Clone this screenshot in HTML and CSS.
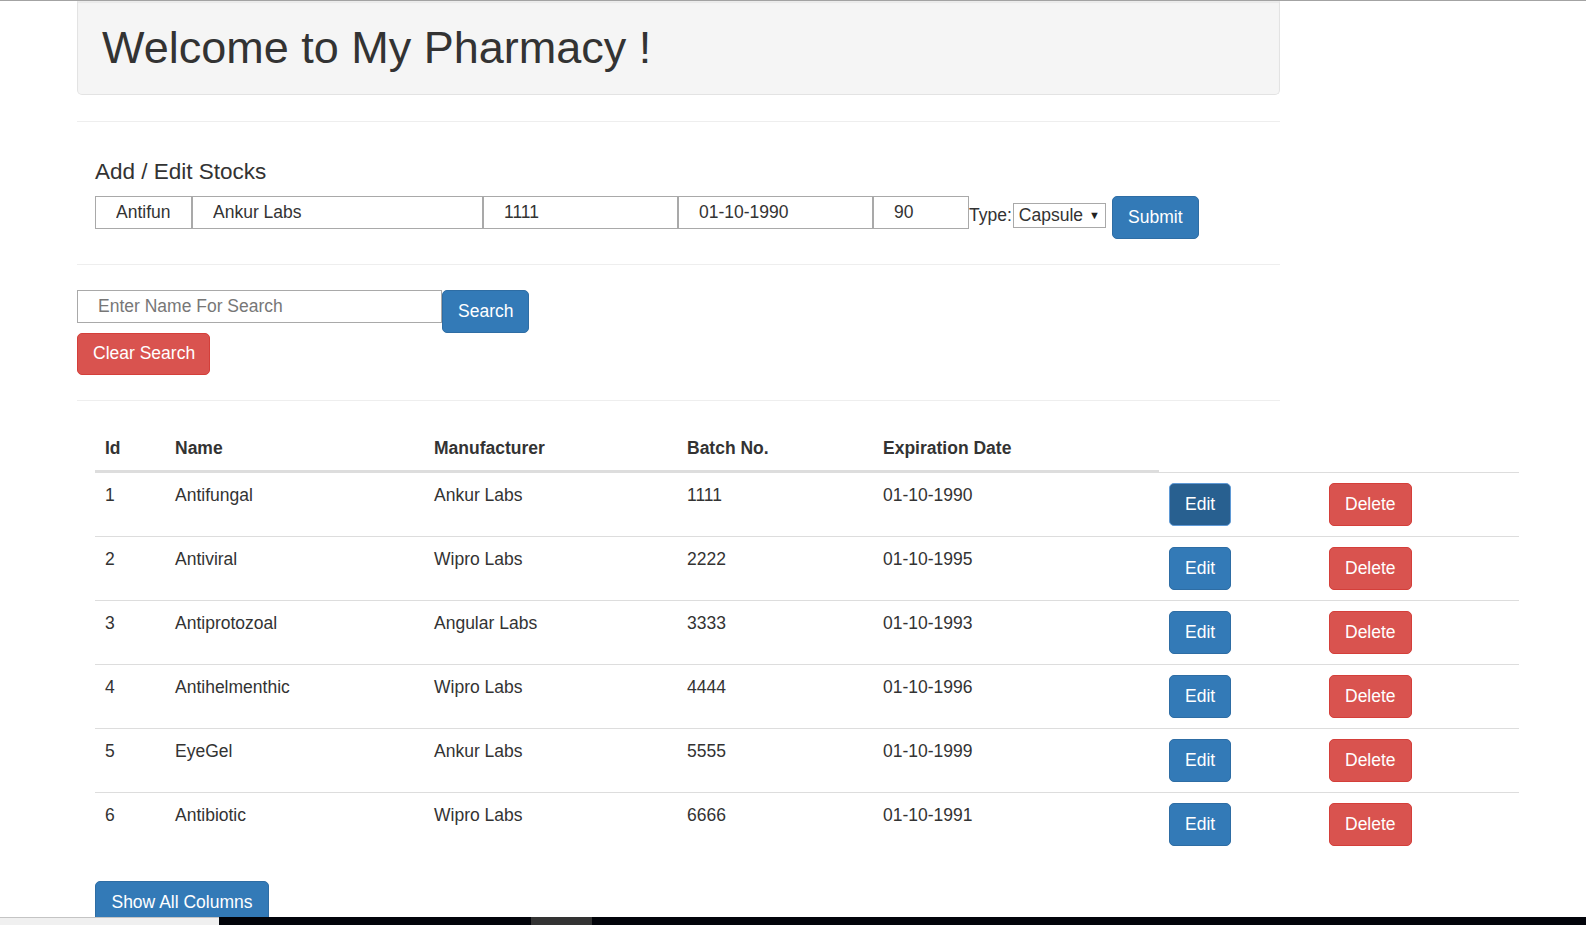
FILE: index.html
```html
<!DOCTYPE html>
<html lang="en">
<head>
<meta charset="utf-8">
<title>My Pharmacy</title>
<link rel="stylesheet" href="styles.css">
</head>
<body>
<div class="topline"></div>
<div class="page">
  <div class="well"><h1>Welcome to My Pharmacy !</h1></div>
  <hr class="rule rule-top">

  <section class="stock-form">
    <h4 class="form-title">Add / Edit Stocks</h4>
    <form class="stock-row">
      <input class="field f-name" type="text" value="Antifun">
      <input class="field f-maker" type="text" value="Ankur Labs">
      <input class="field f-batch" type="text" value="1111">
      <input class="field f-date" type="text" value="01-10-1990">
      <input class="field f-qty" type="text" value="90">
      <label class="type-label">Type:</label>
      <div class="select-wrap">
        <select class="type-select"><option>Capsule</option><option>Tablet</option><option>Syrup</option></select>
      </div>
      <button type="button" class="btn btn-primary submit">Submit</button>
    </form>
  </section>

  <hr class="rule rule-mid">

  <div class="search">
    <div class="search-line">
      <input class="field search-field" type="text" placeholder="Enter Name For Search">
      <button type="button" class="btn btn-primary">Search</button>
    </div>
    <button type="button" class="btn btn-danger clear-btn">Clear Search</button>
  </div>

  <hr class="rule rule-bottom">

  <table class="stock-table">
    <colgroup>
      <col class="c-id"><col class="c-name"><col class="c-maker"><col class="c-batch"><col class="c-date"><col class="c-edit"><col class="c-del">
    </colgroup>
    <thead>
      <tr><th>Id</th><th>Name</th><th>Manufacturer</th><th>Batch No.</th><th>Expiration Date</th></tr>
    </thead>
    <tbody>
      <tr><td>1</td><td>Antifungal</td><td>Ankur Labs</td><td>1111</td><td>01-10-1990</td><td><button type="button" class="btn btn-primary is-active">Edit</button></td><td><button type="button" class="btn btn-danger">Delete</button></td></tr>
      <tr><td>2</td><td>Antiviral</td><td>Wipro Labs</td><td>2222</td><td>01-10-1995</td><td><button type="button" class="btn btn-primary">Edit</button></td><td><button type="button" class="btn btn-danger">Delete</button></td></tr>
      <tr><td>3</td><td>Antiprotozoal</td><td>Angular Labs</td><td>3333</td><td>01-10-1993</td><td><button type="button" class="btn btn-primary">Edit</button></td><td><button type="button" class="btn btn-danger">Delete</button></td></tr>
      <tr><td>4</td><td>Antihelmenthic</td><td>Wipro Labs</td><td>4444</td><td>01-10-1996</td><td><button type="button" class="btn btn-primary">Edit</button></td><td><button type="button" class="btn btn-danger">Delete</button></td></tr>
      <tr><td>5</td><td>EyeGel</td><td>Ankur Labs</td><td>5555</td><td>01-10-1999</td><td><button type="button" class="btn btn-primary">Edit</button></td><td><button type="button" class="btn btn-danger">Delete</button></td></tr>
      <tr><td>6</td><td>Antibiotic</td><td>Wipro Labs</td><td>6666</td><td>01-10-1991</td><td><button type="button" class="btn btn-primary">Edit</button></td><td><button type="button" class="btn btn-danger">Delete</button></td></tr>
    </tbody>
  </table>

  <button type="button" class="btn btn-primary show-all">Show All Columns</button>
</div>

<div class="taskbar">
  <div class="tb-light"></div>
  <div class="tb-dark">
    <div class="tb-gap"></div>
    <div class="tb-item"></div>
  </div>
</div>
</body>
</html>
```

FILE: styles.css
```css
* { box-sizing: border-box; }

html, body {
  margin: 0;
  padding: 0;
  overflow: hidden;
  background: #fff;
}

body {
  font-family: "Liberation Sans", Arial, Helvetica, sans-serif;
  font-size: 17.5px;
  line-height: 25px;
  color: #333;
}

.topline {
  height: 1px;
  background: #a3a3a3;
}

.page {
  padding-left: 77px;
}

/* Header well */
.well {
  width: 1203px;
  height: 94px;
  padding: 0 24px 1px;
  display: flex;
  align-items: center;
  background: #f5f5f5;
  border: 1px solid #e3e3e3;
  border-top-color: #ececec;
  border-radius: 0 0 5px 5px;
  box-shadow: inset 0 1px 1px rgba(0, 0, 0, 0.05);
}

.well h1 {
  margin: 0;
  font-size: 45px;
  font-weight: 400;
  line-height: 50px;
  color: #333;
}

.rule {
  width: 1203px;
  border: 0;
  border-top: 1px solid #eee;
  margin: 0;
}
.rule-top { margin-top: 26px; }
.rule-mid { margin-top: 25px; }
.rule-bottom { margin-top: 25px; }

/* Add / Edit form */
.stock-form {
  padding-left: 18px;
}

.form-title {
  margin: 38px 0 11px;
  font-size: 22.5px;
  font-weight: 400;
  line-height: 24.75px;
  color: #333;
}

.stock-row {
  display: flex;
  align-items: flex-start;
  margin: 0;
}

.field {
  height: 33px;
  margin: 0;
  padding: 0 0 0 20px;
  border: 1px solid #a9a9a9;
  border-radius: 0;
  font-family: inherit;
  font-size: 17.5px;
  color: #333;
  background: #fff;
  outline: none;
}
.field::placeholder { color: #777; }

.f-name  { width: 97px; }
.f-maker { width: 291px; }
.f-batch { width: 195px; }
.f-date  { width: 195px; }
.f-qty   { width: 96px; }

.type-label {
  margin-top: 7px;
  line-height: 25px;
  font-size: 17.5px;
  color: #333;
}

.select-wrap {
  position: relative;
  margin-top: 7px;
  margin-left: 1px;
}
.select-wrap::after {
  content: "\25BC";
  position: absolute;
  right: 6px;
  top: 7px;
  font-size: 11px;
  line-height: 11px;
  color: #222;
  pointer-events: none;
}

.type-select {
  appearance: none;
  -webkit-appearance: none;
  width: 93px;
  height: 25px;
  margin: 0;
  padding: 0 0 0 5px;
  border: 1px solid #a9a9a9;
  border-radius: 0;
  background: #fff;
  font-family: inherit;
  font-size: 17.5px;
  line-height: 23px;
  color: #333;
}

/* Buttons */
.btn {
  display: inline-block;
  height: 43px;
  margin: 0;
  padding: 0 15px;
  border: 1px solid transparent;
  border-radius: 5px;
  font-family: inherit;
  font-size: 17.5px;
  line-height: 25px;
  color: #fff;
  cursor: pointer;
  white-space: nowrap;
}

.btn-primary {
  background: #337ab7;
  border-color: #2e6da4;
}
.btn-primary.is-active {
  background: #286090;
  border-color: #5f9ad6;
  box-shadow: inset 0 0 0 1px #2a5f8f;
}

.btn-danger {
  background: #d9534f;
  border-color: #d43f3a;
}

.submit {
  margin-left: 6px;
  width: 87px;
}

/* Search */
.search {
  margin-top: 25px;
  display: flex;
  flex-direction: column;
  align-items: flex-start;
}

.search-line {
  display: flex;
  align-items: flex-start;
}

.search-field {
  width: 365px;
}

.search-line .btn {
  width: 87px;
}

.clear-btn {
  margin-top: 0;
  width: 133px;
  height: 42px;
}

/* Table */
.stock-table {
  margin: 25px 0 0 18px;
  width: 1424px;
  table-layout: fixed;
  border-collapse: separate;
  border-spacing: 0;
}

.c-id    { width: 70px; }
.c-name  { width: 259px; }
.c-maker { width: 253px; }
.c-batch { width: 196px; }
.c-date  { width: 286px; }
.c-edit  { width: 160px; }
.c-del   { width: 200px; }

.stock-table th {
  padding: 10px 10px 9px;
  text-align: left;
  font-weight: 700;
  vertical-align: bottom;
  border-bottom: 2px solid #ddd;
}

.stock-table td {
  padding: 10px;
  text-align: left;
  vertical-align: top;
  border-top: 1px solid #ddd;
}

.stock-table td .btn {
  display: block;
}

.show-all {
  display: block;
  margin: 25px 0 0 18px;
  width: 174px;
}

/* Screen-capture taskbar strip overlaying the bottom edge */
.taskbar {
  position: fixed;
  left: 0;
  right: 0;
  bottom: 0;
  height: 8px;
  display: flex;
}

.tb-light {
  width: 219px;
  background: #f0f0f0;
  border-top: 1px solid #c4c4c4;
}

.tb-dark {
  flex: 1;
  display: flex;
  background: #02040a;
}

.tb-gap { width: 312px; }

.tb-item {
  width: 61px;
  background: #333;
}
```
